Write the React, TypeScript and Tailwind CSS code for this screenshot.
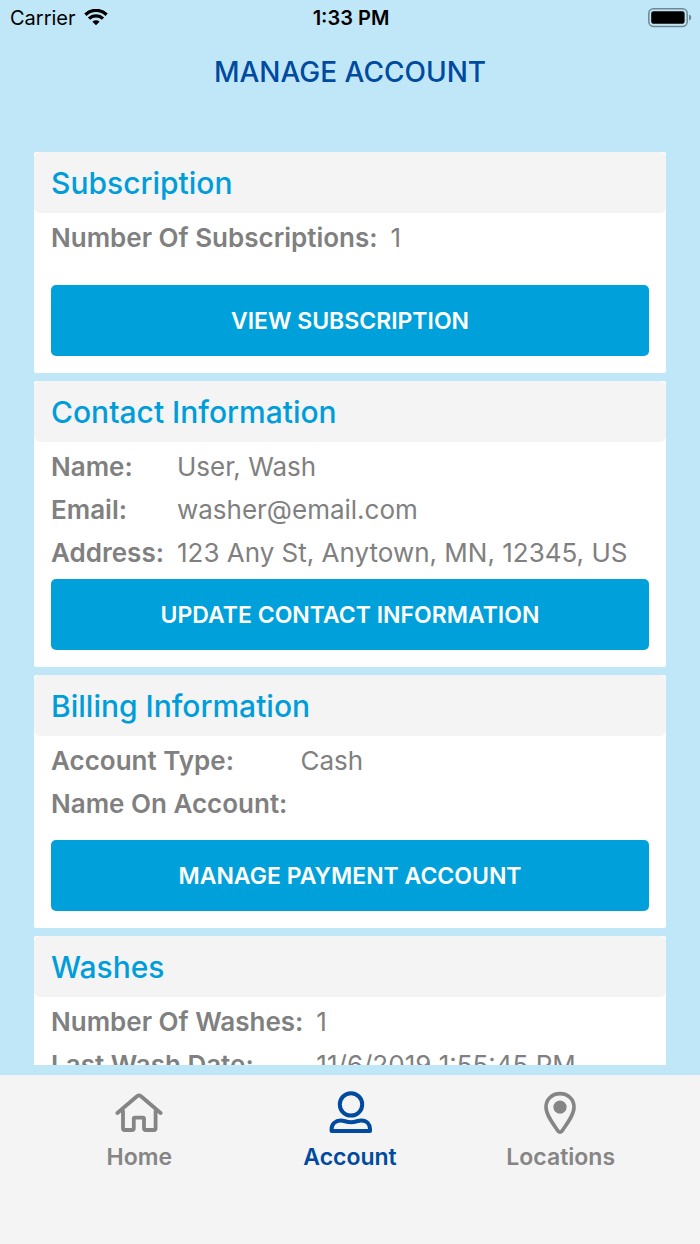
import type { ReactNode } from "react";

type Field = { label: string; value: string };

type CardProps = {
  title: string;
  fields: Field[];
  action?: string;
  actionGap?: string;
};

function StatusBar() {
  return (
    <div className="grid h-9 shrink-0 grid-cols-3 items-center pr-[8px] pl-[10px] text-black">
      <div className="flex items-center gap-2 text-[20px] leading-6">
        <span>Carrier</span>
        <svg width="24" height="18" viewBox="0 0 24 18" aria-label="Wi-Fi" fill="none" stroke="currentColor" strokeWidth="3.3">
          <path d="M1.4 5.7 A15.2 15.2 0 0 1 22.6 5.7" />
          <path d="M5 9.7 A9.9 9.9 0 0 1 19 9.7" />
          <path d="M8.4 12.7 A5.2 5.2 0 0 1 15.6 12.7 L12 16.3 Z" fill="currentColor" stroke="none" />
        </svg>
      </div>
      <time className="text-center text-[20px] leading-6 font-semibold">1:33 PM</time>
      <svg className="justify-self-end" width="44" height="20" viewBox="0 0 44 20" aria-label="Battery">
        <rect x="0.8" y="0.8" width="38.4" height="17.6" rx="4.6" fill="none" stroke="#6f8790" strokeWidth="1.5" />
        <rect x="3.2" y="3.2" width="33.4" height="12.6" rx="2.2" fill="#000" />
        <path d="M41 6.6 C44 7.6 44 11.6 41 12.6 Z" fill="#6f8790" />
      </svg>
    </div>
  );
}

function Card({ title, fields, action, actionGap = "" }: CardProps) {
  return (
    <section className="shrink-0 rounded-[2px] bg-white pb-[17px]">
      <h2 className="rounded-[6px] bg-[#f4f4f4] px-[17px] pt-[13px] pb-[11px] text-[30px] leading-[37px] font-medium text-[#009ddb]">
        {title}
      </h2>
      <dl className="grid grid-cols-[max-content_1fr] gap-x-[13px] px-[17px] pt-[3px] text-[26px] leading-[43px] text-[#808080]">
        {fields.map((field) => (
          <div key={field.label} className="contents">
            <dt className="font-semibold">{field.label}</dt>
            <dd className="whitespace-nowrap">{field.value}</dd>
          </div>
        ))}
      </dl>
      {action && (
        <div className={"px-[17px] " + actionGap}>
          <button
            type="button"
            className="block h-[71px] w-full cursor-pointer rounded-[5px] bg-[#00a1db] text-[23px] leading-8 font-semibold text-white"
          >
            {action}
          </button>
        </div>
      )}
    </section>
  );
}

function NavItem({ label, active = false, children }: { label: string; active?: boolean; children: ReactNode }) {
  return (
    <a
      href={"#" + label.toLowerCase()}
      aria-current={active ? "page" : undefined}
      className={
        "flex flex-1 flex-col items-center gap-[6px] text-[23px] leading-8 font-semibold " +
        (active ? "text-[#004a9f]" : "text-[#858585]")
      }
    >
      {children}
      {label}
    </a>
  );
}

export default function App() {
  return (
    <div className="flex h-screen flex-col bg-[#c0e7f8] font-['Inter','Liberation_Sans',sans-serif]">
      <StatusBar />
      <h1 className="shrink-0 pt-[18px] pb-[62px] text-center text-[28px] leading-9 font-medium text-[#004a9f]">
        MANAGE ACCOUNT
      </h1>
      <main className="mb-[10px] flex min-h-0 flex-1 flex-col gap-2 overflow-y-auto px-[34px] [scrollbar-width:none]">
        <Card
          title="Subscription"
          fields={[{ label: "Number Of Subscriptions:", value: "1" }]}
          action="VIEW SUBSCRIPTION"
          actionGap="pt-[26px]"
        />
        <Card
          title="Contact Information"
          fields={[
            { label: "Name:", value: "User, Wash" },
            { label: "Email:", value: "washer@email.com" },
            { label: "Address:", value: "123 Any St, Anytown, MN, 12345, US" },
          ]}
          action="UPDATE CONTACT INFORMATION"
          actionGap="pt-[5px]"
        />
        <Card
          title="Billing Information"
          fields={[
            { label: "Account Type:", value: "Cash" },
            { label: "Name On Account:", value: "" },
          ]}
          action="MANAGE PAYMENT ACCOUNT"
          actionGap="pt-[15px]"
        />
        <Card
          title="Washes"
          fields={[
            { label: "Number Of Washes:", value: "1" },
            { label: "Last Wash Date:", value: "11/6/2019 1:55:45 PM" },
          ]}
        />
      </main>
      <nav className="flex shrink-0 bg-[#f4f4f4] px-[34px] pt-4 pb-[71px]">
        <NavItem label="Home">
          <svg width="48" height="44" viewBox="0 0 48 44" fill="none" stroke="currentColor" strokeWidth="3.8" strokeLinecap="round" strokeLinejoin="round">
            <path d="M2.4 22 L22 5.2 Q24 3.6 26 5.2 L45.6 22" />
            <path d="M8 20 V37.2 Q8 39 9.8 39 H17 Q18.8 39 18.8 37.2 V27.6 Q18.8 26.6 19.8 26.6 H28 Q29 26.6 29 27.6 V37.2 Q29 39 30.8 39 H38.8 Q40.6 39 40.6 37.2 V20" />
          </svg>
        </NavItem>
        <NavItem label="Account" active>
          <svg width="44" height="44" viewBox="0 0 44 44" fill="none" stroke="currentColor" strokeWidth="4" strokeLinejoin="round">
            <circle cx="23" cy="13.4" r="11.2" />
            <path d="M3.6 40 V38 C3.6 33 7.5 29.4 12.5 29.4 C16.5 29.4 18 31.2 23 31.2 C28 31.2 29.5 29.4 33.5 29.4 C38.5 29.4 42 33 42 38 V40 Z" />
          </svg>
        </NavItem>
        <NavItem label="Locations">
          <svg width="34" height="44" viewBox="0 0 34 44" fill="none" stroke="currentColor" strokeWidth="3.6" strokeLinejoin="round">
            <path d="M16 2.6 C7.8 2.6 2 8.6 2 16 C2 24.1 9 32.6 14 40 Q16 42.2 18 40 C23 32.6 30 24.1 30 16 C30 8.6 24.2 2.6 16 2.6 Z" />
            <circle cx="16" cy="16.2" r="6.6" fill="currentColor" stroke="none" />
          </svg>
        </NavItem>
      </nav>
    </div>
  );
}
